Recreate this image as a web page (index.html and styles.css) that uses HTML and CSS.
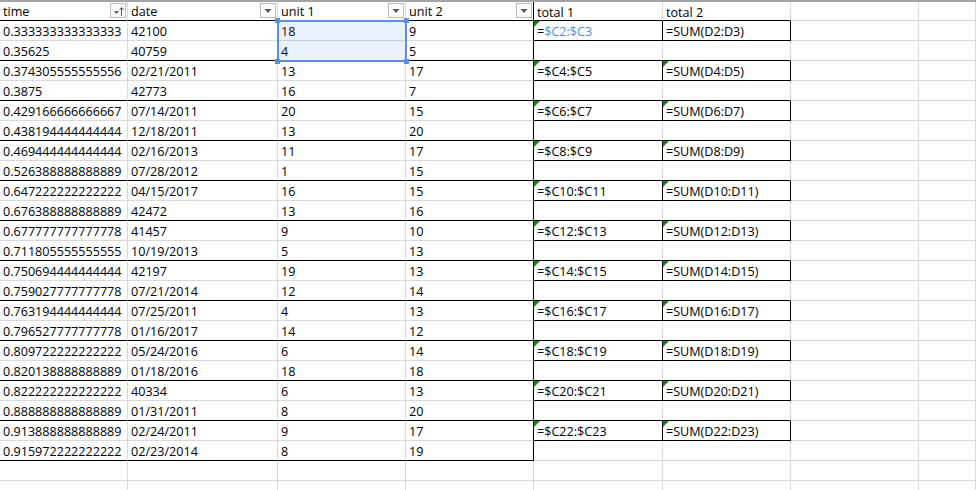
FILE: index.html
```html
<!DOCTYPE html>
<html>
<head>
<meta charset="utf-8">
<link rel="stylesheet" href="styles.css">
</head>
<body>
<div class="sheet">
  <div class="c h bb"><span>time</span><span class="fbtn"><svg width="14" height="13" viewBox="0 0 14 13"><path d="M3 7h5l-2.5 3z" fill="#5a5a5a"/><path d="M10.5 4v8" stroke="#5a5a5a" stroke-width="1"/><path d="M8.5 6l2-2.5 2 2.5" fill="none" stroke="#5a5a5a" stroke-width="1"/></svg></span></div>
  <div class="c h bb"><span>date</span><span class="fbtn"><svg width="14" height="13" viewBox="0 0 14 13"><path d="M3.5 5h7l-3.5 4z" fill="#5a5a5a"/></svg></span></div>
  <div class="c h bb"><span>unit 1</span><span class="fbtn"><svg width="14" height="13" viewBox="0 0 14 13"><path d="M3.5 5h7l-3.5 4z" fill="#5a5a5a"/></svg></span></div>
  <div class="c h bb rb"><span>unit 2</span><span class="fbtn"><svg width="14" height="13" viewBox="0 0 14 13"><path d="M3.5 5h7l-3.5 4z" fill="#5a5a5a"/></svg></span></div>
  <div class="c bb">total 1</div><div class="c bb">total 2</div><div class="c"></div><div class="c"></div>

  <div class="c">0.333333333333333</div><div class="c">42100</div><div class="c">18</div><div class="c rb">9</div>
  <div class="c bb rb tri">=<span class="ref">$C2:$C3</span></div><div class="c bb rb">=SUM(D2:D3)</div><div class="c"></div><div class="c"></div>
  <div class="c bb">0.35625</div><div class="c bb">40759</div><div class="c bb">4</div><div class="c bb rb">5</div>
  <div class="c bb"></div><div class="c bb"></div><div class="c"></div><div class="c"></div>

  <div class="c">0.374305555555556</div><div class="c">02/21/2011</div><div class="c">13</div><div class="c rb">17</div>
  <div class="c bb rb tri">=$C4:$C5</div><div class="c bb rb tri">=SUM(D4:D5)</div><div class="c"></div><div class="c"></div>
  <div class="c bb">0.3875</div><div class="c bb">42773</div><div class="c bb">16</div><div class="c bb rb">7</div>
  <div class="c bb"></div><div class="c bb"></div><div class="c"></div><div class="c"></div>

  <div class="c">0.429166666666667</div><div class="c">07/14/2011</div><div class="c">20</div><div class="c rb">15</div>
  <div class="c bb rb tri">=$C6:$C7</div><div class="c bb rb tri">=SUM(D6:D7)</div><div class="c"></div><div class="c"></div>
  <div class="c bb">0.438194444444444</div><div class="c bb">12/18/2011</div><div class="c bb">13</div><div class="c bb rb">20</div>
  <div class="c bb"></div><div class="c bb"></div><div class="c"></div><div class="c"></div>

  <div class="c">0.469444444444444</div><div class="c">02/16/2013</div><div class="c">11</div><div class="c rb">17</div>
  <div class="c bb rb tri">=$C8:$C9</div><div class="c bb rb tri">=SUM(D8:D9)</div><div class="c"></div><div class="c"></div>
  <div class="c bb">0.526388888888889</div><div class="c bb">07/28/2012</div><div class="c bb">1</div><div class="c bb rb">15</div>
  <div class="c bb"></div><div class="c bb"></div><div class="c"></div><div class="c"></div>

  <div class="c">0.647222222222222</div><div class="c">04/15/2017</div><div class="c">16</div><div class="c rb">15</div>
  <div class="c bb rb tri">=$C10:$C11</div><div class="c bb rb tri">=SUM(D10:D11)</div><div class="c"></div><div class="c"></div>
  <div class="c bb">0.676388888888889</div><div class="c bb">42472</div><div class="c bb">13</div><div class="c bb rb">16</div>
  <div class="c bb"></div><div class="c bb"></div><div class="c"></div><div class="c"></div>

  <div class="c">0.677777777777778</div><div class="c">41457</div><div class="c">9</div><div class="c rb">10</div>
  <div class="c bb rb tri">=$C12:$C13</div><div class="c bb rb tri">=SUM(D12:D13)</div><div class="c"></div><div class="c"></div>
  <div class="c bb">0.711805555555555</div><div class="c bb">10/19/2013</div><div class="c bb">5</div><div class="c bb rb">13</div>
  <div class="c bb"></div><div class="c bb"></div><div class="c"></div><div class="c"></div>

  <div class="c">0.750694444444444</div><div class="c">42197</div><div class="c">19</div><div class="c rb">13</div>
  <div class="c bb rb tri">=$C14:$C15</div><div class="c bb rb tri">=SUM(D14:D15)</div><div class="c"></div><div class="c"></div>
  <div class="c bb">0.759027777777778</div><div class="c bb">07/21/2014</div><div class="c bb">12</div><div class="c bb rb">14</div>
  <div class="c bb"></div><div class="c bb"></div><div class="c"></div><div class="c"></div>

  <div class="c">0.763194444444444</div><div class="c">07/25/2011</div><div class="c">4</div><div class="c rb">13</div>
  <div class="c bb rb tri">=$C16:$C17</div><div class="c bb rb tri">=SUM(D16:D17)</div><div class="c"></div><div class="c"></div>
  <div class="c bb">0.796527777777778</div><div class="c bb">01/16/2017</div><div class="c bb">14</div><div class="c bb rb">12</div>
  <div class="c bb"></div><div class="c bb"></div><div class="c"></div><div class="c"></div>

  <div class="c">0.809722222222222</div><div class="c">05/24/2016</div><div class="c">6</div><div class="c rb">14</div>
  <div class="c bb rb tri">=$C18:$C19</div><div class="c bb rb tri">=SUM(D18:D19)</div><div class="c"></div><div class="c"></div>
  <div class="c bb">0.820138888888889</div><div class="c bb">01/18/2016</div><div class="c bb">18</div><div class="c bb rb">18</div>
  <div class="c bb"></div><div class="c bb"></div><div class="c"></div><div class="c"></div>

  <div class="c">0.822222222222222</div><div class="c">40334</div><div class="c">6</div><div class="c rb">13</div>
  <div class="c bb rb tri">=$C20:$C21</div><div class="c bb rb tri">=SUM(D20:D21)</div><div class="c"></div><div class="c"></div>
  <div class="c bb">0.888888888888889</div><div class="c bb">01/31/2011</div><div class="c bb">8</div><div class="c bb rb">20</div>
  <div class="c bb"></div><div class="c bb"></div><div class="c"></div><div class="c"></div>

  <div class="c">0.913888888888889</div><div class="c">02/24/2011</div><div class="c">9</div><div class="c rb">17</div>
  <div class="c bb rb tri">=$C22:$C23</div><div class="c bb rb tri">=SUM(D22:D23)</div><div class="c"></div><div class="c"></div>
  <div class="c bb">0.915972222222222</div><div class="c bb">02/23/2014</div><div class="c bb">8</div><div class="c bb rb">19</div>
  <div class="c"></div><div class="c"></div><div class="c"></div><div class="c"></div>

  <div class="c"></div><div class="c"></div><div class="c"></div><div class="c"></div><div class="c"></div><div class="c"></div><div class="c"></div><div class="c"></div>
  <div class="c"></div><div class="c"></div><div class="c"></div><div class="c"></div><div class="c"></div><div class="c"></div><div class="c"></div><div class="c"></div>

  <div class="sel">
    <span class="hd tl"></span><span class="hd tr"></span><span class="hd bl"></span><span class="hd br"></span>
  </div>
</div>
</body>
</html>
```

FILE: styles.css
```css
html, body {
  margin: 0;
  padding: 0;
  background: #ffffff;
  overflow: hidden;
}
body {
  width: 976px;
  height: 490px;
}
.sheet {
  position: relative;
  display: grid;
  grid-template-columns: 128px 150px 128px 128px 129px 128px 128px 1fr;
  grid-template-rows: 19px;
  grid-auto-rows: 20px;
  border-top: 2px solid #a3a3a3;
  font-family: "Open Sans", "Liberation Sans", sans-serif;
  font-size: 12.6px;
  color: #000000;
}
.c {
  position: relative;
  box-sizing: border-box;
  border-right: 1px solid #d9d9d9;
  border-bottom: 1px solid #d9d9d9;
  padding: 1px 0 0 3px;
  line-height: 19px;
  white-space: nowrap;
  overflow: hidden;
}
.h {
  display: flex;
  justify-content: space-between;
  align-items: flex-start;
  overflow: visible;
  padding-top: 0;
}
.bb { border-bottom-color: #000000; }
.rb { border-right-color: #000000; }
.ref { color: #4a8fe7; }
.tri::before {
  content: "";
  position: absolute;
  left: 0;
  top: 0;
  border-top: 6px solid #1e7e1e;
  border-right: 6px solid transparent;
}
.fbtn {
  box-sizing: border-box;
  width: 16px;
  height: 15px;
  margin-top: 1px;
  margin-right: 1px;
  border: 1px solid #bdbdbd;
  background: #fbfbfb;
  display: flex;
  align-items: center;
  justify-content: center;
}
.fbtn svg { display: block; }
.sel {
  position: absolute;
  left: 277px;
  top: 18px;
  width: 130px;
  height: 42px;
  box-sizing: border-box;
  border: 2px solid #5b8fe6;
  background: rgba(70, 130, 230, 0.11);
  pointer-events: none;
}
.hd {
  position: absolute;
  width: 5px;
  height: 5px;
  background: #5b8fe6;
}
.tl { left: -4px; top: -4px; }
.tr { right: -4px; top: -4px; }
.bl { left: -4px; bottom: -4px; }
.br { right: -4px; bottom: -4px; }
```
